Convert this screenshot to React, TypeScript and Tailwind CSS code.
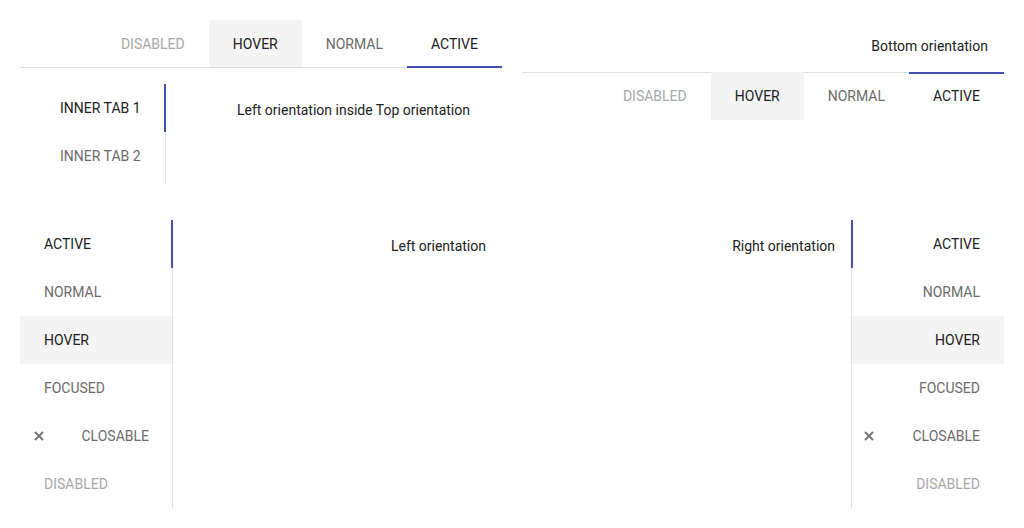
import React from 'react'

type TabState = 'active' | 'hover' | 'normal' | 'focused' | 'closable' | 'disabled'

const textColor: Record<TabState, string> = {
  active: 'text-[#212121]',
  hover: 'text-[#212121]',
  normal: 'text-[#6b6b6b]',
  focused: 'text-[#6b6b6b]',
  closable: 'text-[#6b6b6b]',
  disabled: 'text-[#a8a8a8]',
}

function CloseIcon() {
  return (
    <svg width="10" height="10" viewBox="0 0 10 10" className="shrink-0">
      <path d="M1 1 L9 9 M9 1 L1 9" stroke="#757575" strokeWidth="2" />
    </svg>
  )
}

// horizontal tab, indicator on top or bottom edge
function HTab({ label, state, edge }: { label: string; state: TabState; edge: 'top' | 'bottom' }) {
  return (
    <div
      className={`relative flex items-center px-6 text-sm uppercase ${textColor[state]} ${
        state === 'hover' ? 'bg-[#f4f4f4]' : ''
      } ${edge === 'top' ? '-mt-px h-12' : 'h-[47px]'}`}
    >
      {label}
      {state === 'active' && (
        <span
          className={`absolute left-0 right-0 h-[2px] bg-[#3f51b5] ${
            edge === 'bottom' ? '-bottom-px' : 'top-0'
          }`}
        />
      )}
    </div>
  )
}

// vertical tab, indicator on left or right edge
function VTab({ label, state, side }: { label: string; state: TabState; side: 'left' | 'right' }) {
  const indicator =
    state === 'active' ? (
      <span
        className={`absolute top-0 bottom-0 w-[2px] bg-[#3f51b5] ${
          side === 'right' ? '-right-px' : '-left-px'
        }`}
      />
    ) : null

  if (state === 'closable') {
    return (
      <div
        className={`relative flex h-12 items-center justify-between text-sm uppercase ${textColor[state]} ${
          side === 'right' ? 'pl-[14px] pr-[23px]' : 'pl-3 pr-6'
        }`}
      >
        <CloseIcon />
        <span>{label}</span>
      </div>
    )
  }

  return (
    <div
      className={`relative flex h-12 items-center px-6 text-sm uppercase ${textColor[state]} ${
        side === 'left' ? 'justify-end' : ''
      } ${state === 'hover' ? 'bg-[#f4f4f4]' : ''}`}
    >
      {label}
      {indicator}
    </div>
  )
}

const topTabs: [string, TabState][] = [
  ['Disabled', 'disabled'],
  ['Hover', 'hover'],
  ['Normal', 'normal'],
  ['Active', 'active'],
]

const sideTabs: [string, TabState][] = [
  ['Active', 'active'],
  ['Normal', 'normal'],
  ['Hover', 'hover'],
  ['Focused', 'focused'],
  ['Closable', 'closable'],
  ['Disabled', 'disabled'],
]

export default function App() {
  return (
    <div
      className="grid h-[528px] w-[1024px] grid-cols-2 content-start gap-5 bg-white p-5 text-sm text-[#212121]"
      style={{ fontFamily: 'Roboto, "Noto Sans", sans-serif' }}
    >
      {/* Top orientation */}
      <div className="flex flex-col">
        <div className="flex justify-end border-b border-[#e0e0e0]">
          {topTabs.map(([l, s]) => (
            <HTab key={l} label={l} state={s} edge="bottom" />
          ))}
        </div>
        <div className="p-4">
          <div className="flex">
            <div className="flex h-[100px] flex-col border-r border-[#e0e0e0]">
              <div className="relative flex h-12 items-center px-6 uppercase text-[#212121]">
                Inner tab 1
                <span className="absolute top-0 bottom-0 -right-px w-[2px] bg-[#3f51b5]" />
              </div>
              <div className="flex h-12 items-center px-6 uppercase text-[#6b6b6b]">Inner tab 2</div>
            </div>
            <div className="flex-1 p-4 text-right leading-5">Left orientation inside Top orientation</div>
          </div>
        </div>
      </div>

      {/* Bottom orientation */}
      <div className="flex flex-col">
        <div className="p-4 text-right leading-5">Bottom orientation</div>
        <div className="flex justify-end border-t border-[#e0e0e0]">
          {topTabs.map(([l, s]) => (
            <HTab key={l} label={l} state={s} edge="top" />
          ))}
        </div>
      </div>

      {/* Left orientation */}
      <div className="flex">
        <div className="flex w-[153px] shrink-0 flex-col border-r border-[#e0e0e0]">
          {sideTabs.map(([l, s]) => (
            <VTab key={l} label={l} state={s} side="right" />
          ))}
        </div>
        <div className="flex-1 p-4 text-right leading-5">Left orientation</div>
      </div>

      {/* Right orientation */}
      <div className="flex">
        <div className="flex-1 p-4 text-right leading-5">Right orientation</div>
        <div className="flex w-[153px] shrink-0 flex-col border-l border-[#e0e0e0]">
          {sideTabs.map(([l, s]) => (
            <VTab key={l} label={l} state={s} side="left" />
          ))}
        </div>
      </div>
    </div>
  )
}
